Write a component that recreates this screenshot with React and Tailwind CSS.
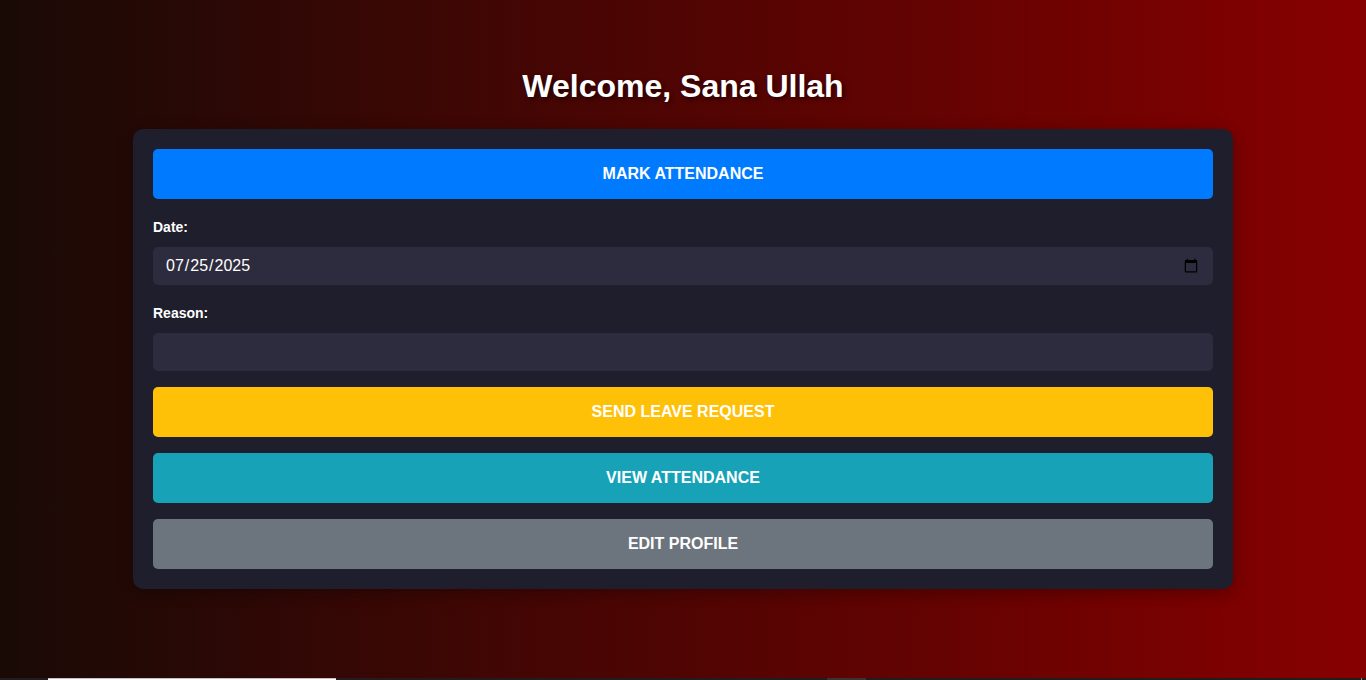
const buttonBase =
  "block h-[50px] w-full rounded-[5px] text-base font-bold uppercase text-white";
const fieldBase =
  "mt-3 block h-[38px] w-full rounded-[5px] bg-[#2d2c3e] px-3 text-base text-white outline-none";
const labelBase = "block text-sm leading-4 font-bold text-white";

export default function App() {
  return (
    <div className="flex min-h-screen flex-col bg-[linear-gradient(to_right,#190a06,#870000)] font-['Liberation_Sans',Arial,sans-serif]">
      <main className="flex grow flex-col items-center px-5 pt-[68px] pb-16">
        <h1 className="text-[32px] leading-[37px] font-bold text-white [text-shadow:2px_2px_4px_rgba(0,0,0,0.6)]">
          Welcome, Sana Ullah
        </h1>
        <section className="mt-6 w-full max-w-[1100px] rounded-[10px] bg-[#1e1e2d] p-5 shadow-[0_4px_15px_rgba(0,0,0,0.3)]">
          <button type="button" className={`${buttonBase} bg-[#007bff]`}>
            Mark Attendance
          </button>
          <form className="mt-5" onSubmit={(e) => e.preventDefault()}>
            <label htmlFor="date" className={labelBase}>
              Date:
            </label>
            <input id="date" type="date" defaultValue="2025-07-25" className={fieldBase} />
            <label htmlFor="reason" className={`${labelBase} mt-5`}>
              Reason:
            </label>
            <input id="reason" type="text" className={fieldBase} />
            <button type="submit" className={`${buttonBase} mt-4 bg-[#ffc107]`}>
              Send Leave Request
            </button>
          </form>
          <button type="button" className={`${buttonBase} mt-4 bg-[#17a2b8]`}>
            View Attendance
          </button>
          <button type="button" className={`${buttonBase} mt-4 bg-[#6c757d]`}>
            Edit Profile
          </button>
        </section>
      </main>
      <div className="flex h-0.5 bg-[#231c1c]">
        <div className="ml-12 w-72 border-t border-[#c8c0c0] bg-white" />
        <div className="ml-[491px] w-[39px] bg-[#3c3232]" />
        <div className="mr-1 ml-auto w-px bg-[#8a8282]" />
      </div>
    </div>
  );
}
